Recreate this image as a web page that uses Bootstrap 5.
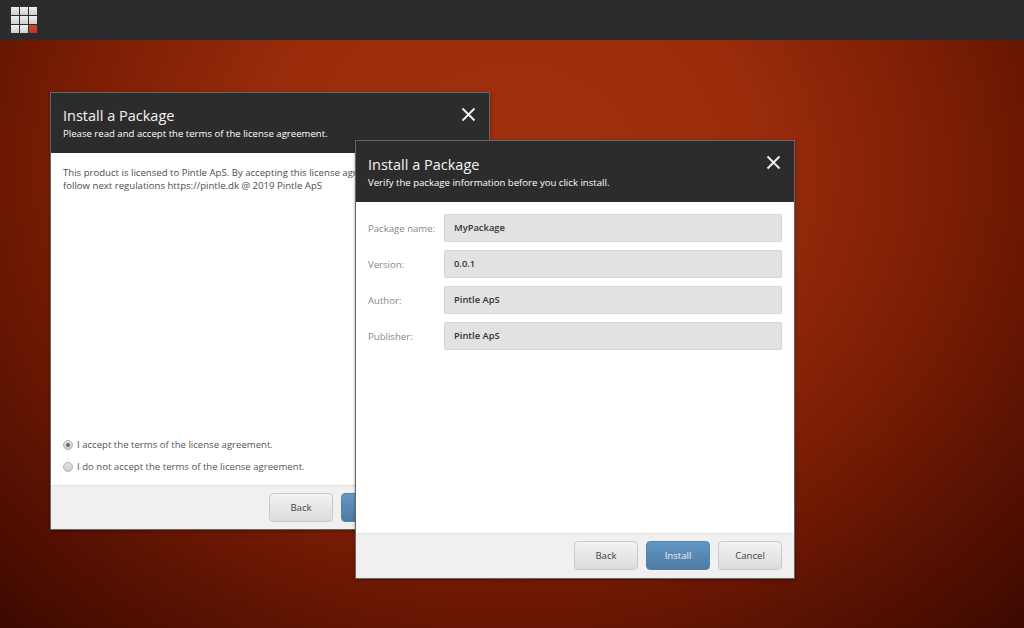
<!DOCTYPE html>
<html lang="en">
<head>
<meta charset="utf-8">
<title>Install a Package</title>
<link rel="stylesheet" href="https://cdn.jsdelivr.net/npm/bootstrap@5.3.0/dist/css/bootstrap.min.css">
<style>
html,body{height:100%;margin:0}
body{font-family:"Open Sans","Liberation Sans",sans-serif;font-size:10px;overflow:hidden;background:#5a1300}
.desk{height:628px;background:radial-gradient(ellipse 700px 600px at 512px 170px,#a03010 0%,#9a2c0c 35%,#7c1e04 62%,#5a1202 85%,#3e0900 105%)}
.topbar{height:40px;background:#2c2c2c;padding:7px 0 0 11px}
.tile-grid{display:grid;grid-template-columns:repeat(3,8px);grid-template-rows:repeat(3,8px);gap:1px}
.tile-grid span{background:linear-gradient(#f0f0f0,#cfcfcf)}
.tile-grid span.hot{background:linear-gradient(#c9492a,#b83a1e)}
.win{position:absolute;background:#fff;border:1px solid #666;display:flex;flex-direction:column;box-shadow:0 1px 3px rgba(0,0,0,.35)}
.win-a{left:50px;top:92px;width:440px;height:438px}
.win-b{left:355px;top:140px;width:440px;height:439px}
.win-head{background:#2c2c2c;color:#fff;padding:14px 12px 0;position:relative;flex:none}
.win-a .win-head{height:60px;padding-top:13px}
.win-b .win-head{height:61px}
.win-head h2{font-family:inherit;font-size:14.5px;font-weight:400;line-height:20px;margin:0 0 1px;color:#f4f4f4}
.win-head p{font-size:9.6px;font-weight:400;line-height:13px;margin:0;color:#fff}
.x-btn{position:absolute;right:13px;top:14px;width:15px;height:15px}
.win-body{flex:1 1 auto;display:flex;flex-direction:column;color:#555;min-height:0}
.licence{padding:13px 12px 0;font-size:9.6px;line-height:13px;color:#4d4d4d;white-space:nowrap;overflow:hidden}
.licence p{margin:0}
.choices{margin-top:auto;padding:0 12px 7px;font-size:9.6px;color:#555}
.choice{display:flex;align-items:center;gap:4px;height:22px}
.radio-dot{width:10px;height:10px;border-radius:50%;border:1px solid #b0b0b0;background:linear-gradient(#e4e4e4,#cfcfcf);display:flex;align-items:center;justify-content:center;flex:none}
.radio-dot.on::after{content:"";width:4px;height:4px;border-radius:50%;background:#666}
.win-foot{flex:none;background:#f0f0f0;border-top:1px solid #e3e3e3;display:flex;justify-content:flex-end;gap:8px;padding:7px 12px}
.win-a .win-foot{height:44px}
.win-b .win-foot{height:45px}
.act{width:64px;height:29px;border-radius:4px;font-size:9.6px;padding:0;line-height:27px;border:1px solid #c9c9c9;background:linear-gradient(#f2f2f2,#dcdcdc);color:#444;font-family:inherit}
.act.go{background:linear-gradient(#6497c3,#4d7ba3);border-color:#5583aa;color:#e8eef4}
.fields{padding:12px 12px 0;display:flex;flex-direction:column;gap:8px}
.field-row{display:flex;align-items:center;height:28px}
.field-row label{width:76px;flex:none;font-size:9.6px;color:#888;padding-top:3px}
.field-val{flex:1 1 auto;height:28px;line-height:26px;background:#e2e2e2;border:1px solid #d4d4d4;border-radius:2px;padding:0 9px;font-size:9.4px;font-weight:600;color:#333}
</style>
</head>
<body>
<div class="desk position-relative">
  <div class="topbar">
    <div class="tile-grid"><span></span><span></span><span></span><span></span><span></span><span></span><span></span><span></span><span class="hot"></span></div>
  </div>

  <div class="win win-a">
    <div class="win-head">
      <h2>Install a Package</h2>
      <p>Please read and accept the terms of the license agreement.</p>
      <svg class="x-btn" viewBox="0 0 15 15"><path d="M1.5 1.5l12 12M13.5 1.5l-12 12" stroke="#f2f2f2" stroke-width="1.9" fill="none"/></svg>
    </div>
    <div class="win-body">
      <div class="licence">
        <p>This product is licensed to Pintle ApS. By accepting this license agreement you agree to</p>
        <p>follow next regulations https://pintle.dk @ 2019 Pintle ApS</p>
      </div>
      <div class="choices">
        <div class="choice"><span class="radio-dot on"></span><span>I accept the terms of the license agreement.</span></div>
        <div class="choice"><span class="radio-dot"></span><span>I do not accept the terms of the license agreement.</span></div>
      </div>
    </div>
    <div class="win-foot">
      <button class="btn act" type="button">Back</button>
      <button class="btn act go" type="button">Next</button>
      <button class="btn act" type="button">Cancel</button>
    </div>
  </div>

  <div class="win win-b">
    <div class="win-head">
      <h2>Install a Package</h2>
      <p>Verify the package information before you click install.</p>
      <svg class="x-btn" viewBox="0 0 15 15"><path d="M1.5 1.5l12 12M13.5 1.5l-12 12" stroke="#f2f2f2" stroke-width="1.9" fill="none"/></svg>
    </div>
    <div class="win-body">
      <div class="fields">
        <div class="field-row"><label>Package name:</label><div class="field-val">MyPackage</div></div>
        <div class="field-row"><label>Version:</label><div class="field-val">0.0.1</div></div>
        <div class="field-row"><label>Author:</label><div class="field-val">Pintle ApS</div></div>
        <div class="field-row"><label>Publisher:</label><div class="field-val">Pintle ApS</div></div>
      </div>
    </div>
    <div class="win-foot">
      <button class="btn act" type="button">Back</button>
      <button class="btn act go" type="button">Install</button>
      <button class="btn act" type="button">Cancel</button>
    </div>
  </div>
</div>
</body>
</html>
